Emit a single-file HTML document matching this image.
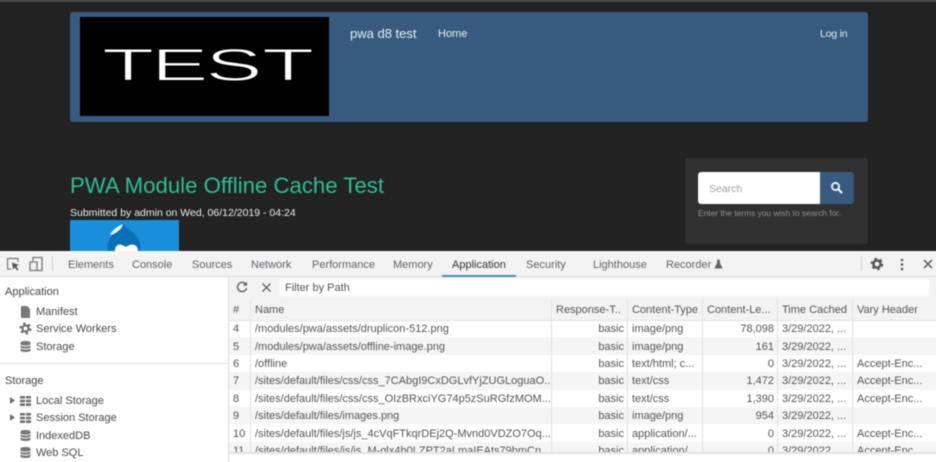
<!DOCTYPE html>
<html>
<head>
<meta charset="utf-8">
<style>
html,body{margin:0;padding:0;width:936px;height:462px;overflow:hidden;background:#222;}
body{position:relative;font-family:"Liberation Sans",sans-serif;}
#w{position:absolute;left:-10px;top:-10px;width:956px;height:482px;overflow:hidden;filter:blur(.4px);}
#i{position:absolute;left:10px;top:10px;width:936px;height:462px;}
.a{position:absolute;white-space:nowrap;}
.tab{position:absolute;top:259px;font-size:11px;line-height:13px;color:#5f6368;white-space:nowrap;}
.side{position:absolute;font-size:11px;line-height:13px;color:#4a4a4a;white-space:nowrap;}
table{position:absolute;border-collapse:collapse;table-layout:fixed;font-size:11px;color:#555;}
td,th{height:17.4px;padding:2px 3px 0 4px;box-sizing:border-box;line-height:13px;white-space:nowrap;overflow:hidden;border-left:1px solid #e2e2e2;font-weight:normal;text-align:left;}
th{height:20px;background:#f3f3f3;border-bottom:1px solid #e2e2e2;}
tr:nth-child(even) td{background:#fff;}
tr:nth-child(odd) td{background:#f5f5f5;}
.r{text-align:right;}
svg{position:absolute;overflow:visible;}
</style>
</head>
<body>
<div id="w"><div id="i">
<div class="a" style="left:-10px;top:-10px;width:956px;height:12px;background:#4a4a4a"></div>
<div class="a" style="left:70px;top:12px;width:798px;height:110px;background:#375a7f;border-radius:3px"></div>
<div class="a" style="left:80px;top:17px;width:249px;height:99px;background:#000"></div>
<svg style="left:80px;top:17px" width="249" height="99"><text transform="scale(1.9,1)" x="11.600 37.500 66 95.800" y="63.500" font-family="Liberation Sans" font-size="45" fill="#fff" stroke="#000" stroke-width="1">TEST</text></svg>
<div class="a" style="left:350px;top:26px;font-size:13px;line-height:16px;color:#e8eef3">pwa d8 test</div>
<div class="a" style="left:438px;top:27px;font-size:11px;line-height:14px;color:#e8eef3">Home</div>
<div class="a" style="left:820px;top:27px;font-size:10.500px;line-height:14px;letter-spacing:-.2px;color:#e8eef3">Log in</div>
<div class="a" style="left:70px;top:172px;font-size:22.200px;line-height:28px;color:#2bbf92">PWA Module Offline Cache Test</div>
<div class="a" style="left:70px;top:206px;font-size:10.500px;line-height:14px;color:#eee">Submitted by admin on Wed, 06/12/2019 - 04:24</div>
<div class="a" style="left:70px;top:220px;width:109px;height:31px;background:#1a8fd9;overflow:hidden">
<svg style="left:0;top:0" width="109" height="31">
<path d="M53 3C52 9 44 12 40 18C34 28 39 44 54 44C69 44 74 28 68 18C64 12 56 8 53 3Z" fill="#0a6fb5"/>
<path d="M40 15C42 10 48 6 53 4C52 9 46 14 40 15Z" fill="#e4f3fb"/>
<path d="M45 31C45 24 50 23 56 27C61 23 68 24 68 31L68 36L45 36Z" fill="#fff"/>
</svg>
</div>
<div class="a" style="left:685px;top:158px;width:183px;height:86px;background:#303030;border-radius:3px"></div>
<div class="a" style="left:698px;top:172px;width:122px;height:32px;background:#fff;border-radius:3px 0 0 3px"></div>
<div class="a" style="left:709px;top:182px;font-size:10.500px;line-height:14px;color:#a0a0a0">Search</div>
<div class="a" style="left:820px;top:172px;width:34px;height:32px;background:#375a7f;border-radius:0 3px 3px 0"></div>
<svg style="left:830px;top:181px" width="14" height="14" viewBox="0 0 14 14"><circle cx="5.500" cy="5.500" r="3.600" fill="none" stroke="#fff" stroke-width="1.700"/><path d="M8.500 8.500L11.500 11.500" stroke="#fff" stroke-width="2" stroke-linecap="round"/></svg>
<div class="a" style="left:698px;top:207px;font-size:8.400px;line-height:12px;color:#8f8f8f">Enter the terms you wish to search for.</div>

<div class="a" style="left:-10px;top:251px;width:956px;height:221px;background:#fff"></div>
<div class="a" style="left:-10px;top:251px;width:956px;height:25px;background:#f3f3f3;border-bottom:1px solid #dcdcdc"></div>
<svg style="left:6px;top:257px" width="14" height="14" viewBox="0 0 14 14"><path d="M5 12H1.500V1.500H12V5" fill="none" stroke="#7a7a7a" stroke-width="1.200"/><path d="M6 5.500L13 8L10.200 9.500L12.500 12.500L11 13.500L9 10.500L7 12.500Z" fill="#555"/></svg>
<svg style="left:28px;top:256px" width="16" height="16" viewBox="0 0 16 16"><path d="M5 5V1.500H14V14.500H2V6H9V14.500" fill="none" stroke="#777" stroke-width="1.300"/></svg>
<div class="a" style="left:52px;top:256px;width:1px;height:15px;background:#d0d0d0"></div>
<div class="tab" style="left:68px">Elements</div>
<div class="tab" style="left:132px">Console</div>
<div class="tab" style="left:192px">Sources</div>
<div class="tab" style="left:251px">Network</div>
<div class="tab" style="left:312px">Performance</div>
<div class="tab" style="left:393px">Memory</div>
<div class="tab" style="left:452px;color:#333">Application</div>
<div class="a" style="left:442px;top:275px;width:74px;height:1.500px;background:#4a8ab8"></div>
<div class="tab" style="left:526px">Security</div>
<div class="tab" style="left:593px">Lighthouse</div>
<div class="tab" style="left:666px">Recorder</div>
<svg style="left:714px;top:259px" width="9" height="10" viewBox="0 0 10 11"><path d="M3.500 .5H6.500V4L9.500 10.500H.5L3.500 4Z" fill="#666"/></svg>
<div class="a" style="left:861px;top:256px;width:1px;height:15px;background:#d0d0d0"></div>
<svg style="left:870px;top:257px" width="14" height="14" viewBox="0 0 14 14"><circle cx="7" cy="7" r="3.600" fill="none" stroke="#5a5a5a" stroke-width="2.600"/><circle cx="7" cy="7" r="5.300" fill="none" stroke="#5a5a5a" stroke-width="2" stroke-dasharray="2.600 2.950"/></svg>
<svg style="left:900px;top:258px" width="4" height="13" viewBox="0 0 4 13"><circle cx="2" cy="2" r="1.300" fill="#5a5a5a"/><circle cx="2" cy="6.500" r="1.300" fill="#5a5a5a"/><circle cx="2" cy="11" r="1.300" fill="#5a5a5a"/></svg>
<svg style="left:923px;top:259px" width="10" height="10" viewBox="0 0 10 10"><path d="M1 1L9 9M9 1L1 9" stroke="#5a5a5a" stroke-width="1.500"/></svg>

<div class="side" style="left:5px;top:286px;color:#444">Application</div>
<svg style="left:21px;top:306px" width="9" height="12" viewBox="0 0 9 12"><path d="M0 0H6L9 3V12H0Z" fill="#777"/></svg>
<div class="side" style="left:36px;top:306px">Manifest</div>
<svg style="left:19px;top:322px" width="13" height="13" viewBox="0 0 13 13"><circle cx="6.500" cy="6.500" r="3" fill="none" stroke="#6a6a6a" stroke-width="2"/><circle cx="6.500" cy="6.500" r="5" fill="none" stroke="#6a6a6a" stroke-width="2" stroke-dasharray="2.500 2.740"/></svg>
<div class="side" style="left:36px;top:323px">Service Workers</div>
<svg style="left:20px;top:340px" width="11" height="13" viewBox="0 0 11 13"><path d="M.5 2.500C.5 .5 10.500 .5 10.500 2.500V10.500C10.500 12.500 .5 12.500 .5 10.500Z" fill="#777"/><path d="M.5 5C3 6.500 8 6.500 10.500 5M.5 8C3 9.500 8 9.500 10.500 8" stroke="#fff" fill="none"/></svg>
<div class="side" style="left:36px;top:341px">Storage</div>
<div class="a" style="left:-10px;top:363px;width:238px;height:1px;background:#e0e0e0"></div>
<div class="side" style="left:5px;top:375px;color:#444">Storage</div>
<svg style="left:10px;top:397px" width="5" height="7" viewBox="0 0 6 8"><path d="M0 0L6 4L0 8Z" fill="#6a6a6a"/></svg>
<svg style="left:20px;top:396px" width="11" height="10" viewBox="0 0 11 10"><path d="M0 0H5V2.500H0ZM6 0H11V2.500H6ZM0 3.700H5V6.200H0ZM6 3.700H11V6.200H6ZM0 7.400H5V10H0ZM6 7.400H11V10H6Z" fill="#707070"/></svg>
<div class="side" style="left:36px;top:395px">Local Storage</div>
<svg style="left:10px;top:414px" width="5" height="7" viewBox="0 0 6 8"><path d="M0 0L6 4L0 8Z" fill="#6a6a6a"/></svg>
<svg style="left:20px;top:413px" width="11" height="10" viewBox="0 0 11 10"><path d="M0 0H5V2.500H0ZM6 0H11V2.500H6ZM0 3.700H5V6.200H0ZM6 3.700H11V6.200H6ZM0 7.400H5V10H0ZM6 7.400H11V10H6Z" fill="#707070"/></svg>
<div class="side" style="left:36px;top:412px">Session Storage</div>
<svg style="left:20px;top:429px" width="11" height="13" viewBox="0 0 11 13"><path d="M.5 2.500C.5 .5 10.500 .5 10.500 2.500V10.500C10.500 12.500 .5 12.500 .5 10.500Z" fill="#777"/><path d="M.5 5C3 6.500 8 6.500 10.500 5M.5 8C3 9.500 8 9.500 10.500 8" stroke="#fff" fill="none"/></svg>
<div class="side" style="left:36px;top:430px">IndexedDB</div>
<svg style="left:20px;top:446px" width="11" height="13" viewBox="0 0 11 13"><path d="M.5 2.500C.5 .5 10.500 .5 10.500 2.500V10.500C10.500 12.500 .5 12.500 .5 10.500Z" fill="#777"/><path d="M.5 5C3 6.500 8 6.500 10.500 5M.5 8C3 9.500 8 9.500 10.500 8" stroke="#fff" fill="none"/></svg>
<div class="side" style="left:36px;top:447px">Web SQL</div>
<div class="a" style="left:228px;top:276px;width:1px;height:196px;background:#dcdcdc"></div>

<div class="a" style="left:229px;top:277px;width:717px;height:23px;background:#f3f3f3"></div>
<svg style="left:236px;top:281px" width="12" height="12" viewBox="0 0 12 12"><path d="M10 3.500A4.600 4.600 0 1 0 10.600 7" fill="none" stroke="#666" stroke-width="1.500"/><path d="M11 .5V4.800H6.700Z" fill="#666"/></svg>
<svg style="left:262px;top:283px" width="9" height="9" viewBox="0 0 9 9"><path d="M.5 .5L8.500 8.500M8.500 .5L.5 8.500" stroke="#666" stroke-width="1.400"/></svg>
<div class="a" style="left:280px;top:279px;width:649px;height:17px;background:#fff"></div>
<div class="a" style="left:285px;top:282px;font-size:11px;line-height:13px;color:#555">Filter by Path</div>

<div class="a" style="left:229px;top:300px;width:717px;height:153px;overflow:hidden">
<table style="left:-1px;top:0;width:718px">
<colgroup><col style="width:22px"><col style="width:301px"><col style="width:76px"><col style="width:75px"><col style="width:75px"><col style="width:75px"><col style="width:94px"></colgroup>
<tr><th>#</th><th>Name</th><th>Response-T..</th><th>Content-Type</th><th>Content-Le...</th><th>Time Cached</th><th>Vary Header</th></tr>
<tr><td>4</td><td>/modules/pwa/assets/druplicon-512.png</td><td class="r">basic</td><td>image/png</td><td class="r">78,098</td><td>3/29/2022, ...</td><td></td></tr>
<tr><td>5</td><td>/modules/pwa/assets/offline-image.png</td><td class="r">basic</td><td>image/png</td><td class="r">161</td><td>3/29/2022, ...</td><td></td></tr>
<tr><td>6</td><td>/offline</td><td class="r">basic</td><td>text/html; c...</td><td class="r">0</td><td>3/29/2022, ...</td><td>Accept-Enc...</td></tr>
<tr><td>7</td><td>/sites/default/files/css/css_7CAbgI9CxDGLvfYjZUGLoguaO...</td><td class="r">basic</td><td>text/css</td><td class="r">1,472</td><td>3/29/2022, ...</td><td>Accept-Enc...</td></tr>
<tr><td>8</td><td>/sites/default/files/css/css_OIzBRxciYG74p5zSuRGfzMOM...</td><td class="r">basic</td><td>text/css</td><td class="r">1,390</td><td>3/29/2022, ...</td><td>Accept-Enc...</td></tr>
<tr><td>9</td><td>/sites/default/files/images.png</td><td class="r">basic</td><td>image/png</td><td class="r">954</td><td>3/29/2022, ...</td><td></td></tr>
<tr><td>10</td><td>/sites/default/files/js/js_4cVqFTkqrDEj2Q-Mvnd0VDZO7Oq...</td><td class="r">basic</td><td>application/...</td><td class="r">0</td><td>3/29/2022, ...</td><td>Accept-Enc...</td></tr>
<tr><td>11</td><td>/sites/default/files/js/js_M-qlx4b0LZPT2aLmaIEAts79bmCn</td><td class="r">basic</td><td>application/...</td><td class="r">0</td><td>3/29/2022, ...</td><td>Accept-Enc...</td></tr>
</table>
</div>
<div class="a" style="left:229px;top:452px;width:717px;height:2px;background:#e2e2e2"></div>
</div></div>
</body>
</html>
